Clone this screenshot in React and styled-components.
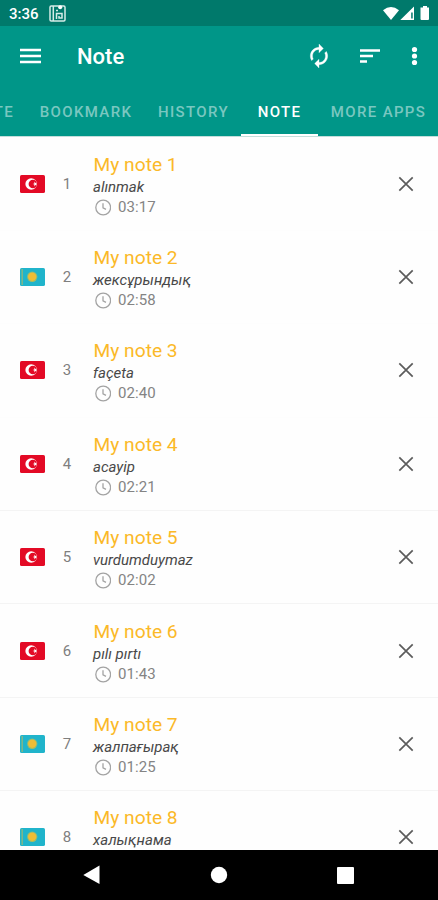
import React from 'react';
import styled, { createGlobalStyle } from 'styled-components';

const GlobalStyle = createGlobalStyle`
  * {
    box-sizing: border-box;
  }
  body {
    margin: 0;
    background: #fff;
    font-family: Roboto, "Noto Sans", sans-serif;
  }
  svg {
    display: block;
    flex: none;
  }
`;

const Screen = styled.div`
  display: flex;
  flex-direction: column;
  width: 438px;
  height: 900px;
  overflow: hidden;
  background: #fefefe;
`;

const StatusBar = styled.div`
  display: flex;
  align-items: center;
  height: 26px;
  flex: none;
  padding: 1px 7px 0 9px;
  background: #00796b;
  color: #fff;
`;

const Clock = styled.span`
  width: 40px;
  font-size: 15px;
  font-weight: 500;
  line-height: 20px;
  white-space: nowrap;
`;

const StatusIcons = styled.div`
  display: flex;
  align-items: center;
  margin-left: auto;
`;

const Toolbar = styled.div`
  display: flex;
  align-items: center;
  height: 62px;
  flex: none;
  padding: 0 18px 2px 20px;
  background: #009688;
  color: #fff;
`;

const Title = styled.h1`
  flex: 1;
  margin: 2px 0 0 36px;
  font-size: 22px;
  font-weight: 500;
  line-height: 26px;
`;

const Actions = styled.div`
  display: flex;
  align-items: center;
`;

const Tabs = styled.div`
  display: flex;
  height: 49px;
  flex: none;
  background: #009688;
  border-bottom: 1px solid #c3dedb;
  overflow: hidden;
`;

const Tab = styled.div`
  display: flex;
  align-items: center;
  justify-content: ${props => (props.$clipped ? 'flex-end' : 'center')};
  flex: none;
  width: ${props => props.$width}px;
  padding-top: ${props => (props.$active ? 2 : 0)}px;
  padding-right: ${props => (props.$clipped ? 12 : 0)}px;
  border-bottom: ${props => (props.$active ? '2px solid #fff' : 'none')};
  color: ${props => (props.$active ? '#fff' : '#7ac7c0')};
  font-size: 15px;
  font-weight: 500;
  letter-spacing: 1.35px;
  white-space: nowrap;
`;

const List = styled.div`
  flex: 1;
  min-height: 0;
  overflow: hidden;
  padding-top: 0.6px;
`;

const Row = styled.div`
  display: flex;
  align-items: center;
  height: 93.36px;
  padding: 0 24px 0 19px;
  border-bottom: 1px solid ${props => (props.$faint ? '#fdfdfd' : '#f4f4f4')};
`;

const Index = styled.span`
  width: 20px;
  margin: 0 17px 0 12px;
  color: #7f7f7f;
  font-size: 15px;
  text-align: center;
`;

const Note = styled.div`
  display: flex;
  flex-direction: column;
  flex: 1;
  height: 64px;
  margin-top: 2px;
`;

const NoteTitle = styled.div`
  margin-left: -0.5px;
  color: #fbb928;
  font-size: 19.2px;
  line-height: 24px;
`;

const Word = styled.div`
  margin-left: -1px;
  color: #484848;
  font-size: 15px;
  font-style: italic;
  line-height: 21px;
`;

const Time = styled.div`
  display: flex;
  align-items: center;
  gap: 7px;
  color: #848484;
  font-size: 15px;
  letter-spacing: 0.1px;
  line-height: 19px;
`;

const NavBar = styled.div`
  display: flex;
  align-items: center;
  justify-content: space-between;
  height: 50px;
  flex: none;
  padding: 0 84px 0 83px;
  background: #000;
`;

const TurkishFlag = () => (
  <svg width="26" height="18" viewBox="0 0 26 18">
    <rect x="1" width="25" height="18" rx="1.6" fill="#e30a25" />
    <circle cx="12.2" cy="9" r="5.8" fill="#fff" />
    <circle cx="13.9" cy="9" r="4.3" fill="#e30a25" />
    <path d="M13.6 9l1.8-.6v-1.9l1.1 1.6 1.8-.6-1.1 1.5 1.1 1.5-1.8-.6-1.1 1.6v-1.9z" fill="#fff" />
  </svg>
);

const KazakhFlag = () => (
  <svg width="26" height="18" viewBox="0 0 26 18">
    <rect x="1" width="25" height="18" rx="1.6" fill="#20b4cb" />
    <path d="M3.2 1v16" stroke="#86b783" strokeWidth="1.4" />
    <circle cx="13.2" cy="8.8" r="5.2" fill="#84bb82" />
    <circle cx="13.2" cy="8.8" r="4.2" fill="#efbd36" />
    <path d="M8.9 11.7q4.3 4 8.6 0l-4.3 1.3z" fill="#b6bd55" />
  </svg>
);

const NoteRow = ({ note, number }) => (
  <Row $faint={number < 4}>
    {note.flag === 'tr' ? <TurkishFlag /> : <KazakhFlag />}
    <Index>{number}</Index>
    <Note>
      <NoteTitle>My note {number}</NoteTitle>
      <Word>{note.word}</Word>
      {note.time && (
        <Time>
          <svg width="17" height="17" viewBox="0 0 17 17" fill="none" stroke="#a3a3a3" strokeWidth="1.3">
            <circle cx="9.2" cy="8.5" r="7.4" />
            <path d="M9 4.2v4.6l3 1.5" />
          </svg>
          {note.time}
        </Time>
      )}
    </Note>
    <svg width="16" height="16" viewBox="0 0 16 16" stroke="#5c5c5c" strokeWidth="1.7">
      <path d="M1.3 1.3l13.4 13.4M14.7 1.3L1.3 14.7" />
    </svg>
  </Row>
);

const notes = [
  { flag: 'tr', word: 'alınmak', time: '03:17' },
  { flag: 'kz', word: 'жексұрындық', time: '02:58' },
  { flag: 'tr', word: 'façeta', time: '02:40' },
  { flag: 'tr', word: 'acayip', time: '02:21' },
  { flag: 'tr', word: 'vurdumduymaz', time: '02:02' },
  { flag: 'tr', word: 'pılı pırtı', time: '01:43' },
  { flag: 'kz', word: 'жалпағырақ', time: '01:25' },
  { flag: 'kz', word: 'халықнама' },
];

const App = () => {
  return (
    <>
      <GlobalStyle />
      <Screen>
        <StatusBar>
          <Clock>3:36</Clock>
          <svg width="17" height="17" viewBox="0 0 17 17" fill="none" stroke="#d5ebe8" strokeWidth="1.5">
            <rect x="1" y="1" width="15" height="15" rx="1.2" />
            <path d="M4.3 1v15M7 5.5h2M7.5 14V8.5H13V13h-3v-2" />
            <circle cx="11.2" cy="2.2" r="2" fill="#fff" stroke="none" />
          </svg>
          <StatusIcons>
            <svg width="48" height="16" viewBox="0 0 48 16" fill="#fff">
              <path d="M0 4.3Q8-2.3 16 4.3L8 14z" />
              <path fillRule="evenodd" d="M31 .6V14H17.3zM28.2 6.5v6h1.5v-6z" />
              <path d="M40 0h4v1.6h2V13a1 1 0 0 1-1 1h-6.5a1 1 0 0 1-1-1V1.6H40z" />
            </svg>
          </StatusIcons>
        </StatusBar>
        <Toolbar>
          <svg width="21" height="16" viewBox="0 0 21 16" stroke="#fff" strokeWidth="2.4">
            <path d="M0 2h21M0 8h21M0 14h21" />
          </svg>
          <Title>Note</Title>
          <Actions>
            <svg width="26" height="26" viewBox="0 0 24 24" fill="#fff" stroke="#fff" strokeWidth=".3">
              <path d="M12 6v3l4-4-4-4v3c-4.42 0-8 3.58-8 8 0 1.57.46 3.03 1.24 4.26L6.7 14.8A5.9 5.9 0 0 1 6 12c0-3.31 2.69-6 6-6zm6.76 1.74L17.3 9.2c.44.84.7 1.79.7 2.8 0 3.31-2.69 6-6 6v-3l-4 4 4 4v-3c4.42 0 8-3.58 8-8 0-1.57-.46-3.03-1.24-4.26z" />
            </svg>
            <svg width="77" height="16" viewBox="0 0 77 16" stroke="#fff" strokeWidth="2.4">
              <path d="M28 2.5h20M28 8h13M28 13.5h7" />
            </svg>
            <svg width="11" height="20" viewBox="0 0 11 20" fill="#fff">
              <circle cx="5.5" cy="3.5" r="2.6" />
              <circle cx="5.5" cy="10" r="2.6" />
              <circle cx="5.5" cy="16.5" r="2.6" />
            </svg>
          </Actions>
        </Toolbar>
        <Tabs>
          <Tab $width={26} $clipped>TE</Tab>
          <Tab $width={120}>BOOKMARK</Tab>
          <Tab $width={95}>HISTORY</Tab>
          <Tab $width={77} $active>NOTE</Tab>
          <Tab $width={121}>MORE APPS</Tab>
        </Tabs>
        <List>
          {notes.map((note, i) => (
            <NoteRow key={note.word} note={note} number={i + 1} />
          ))}
        </List>
        <NavBar>
          <svg width="17" height="20" viewBox="0 0 17 20" fill="#fff">
            <path d="M16.5.5v18.5L.3 10z" />
          </svg>
          <svg width="18" height="18" viewBox="0 0 18 18" fill="#fff">
            <circle cx="9" cy="9" r="8.2" />
          </svg>
          <svg width="17" height="17" viewBox="0 0 17 17" fill="#fff">
            <rect width="17" height="17" rx="1" />
          </svg>
        </NavBar>
      </Screen>
    </>
  );
};

export default App;
